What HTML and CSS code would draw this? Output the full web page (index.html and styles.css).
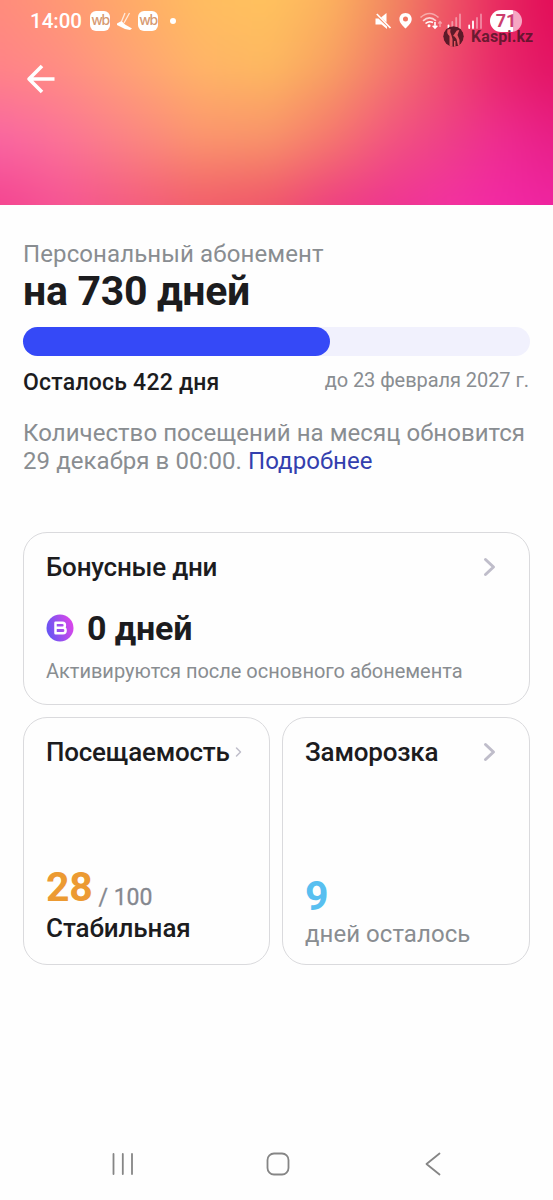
FILE: index.html
```html
<!DOCTYPE html>
<html lang="ru">
<head>
<meta charset="utf-8">
<title>Абонемент</title>
<link rel="stylesheet" href="styles.css">
</head>
<body>
<header class="hero">
  <div class="mesh"><div class="row top"></div><div class="row mid"></div><div class="row low"></div><div class="row end"></div></div>
  <div class="status">
    <span class="clock">14:00</span>
    <span class="wb">wb</span>
    <svg class="plane" width="17" height="20" viewBox="0 0 17 20"><path d="M1 12.500L5.500 10L9 13.500L16 17.500L14 19L9 18L1 14Z" fill="#fff"/><path d="M5.500 10.500L9 2M8 12L13.500 2" stroke="#fff" stroke-width="1.300" opacity=".75"/></svg>
    <span class="wb">wb</span>
    <span class="dot"></span>
    <span class="spacer"></span>
    <svg class="icons" width="109" height="22" viewBox="0 0 109 22" fill="none">
      <g fill="#fff"><path d="M.5 8.500H3.500L12 16.500V19L6.500 14.500H.5Z"/><path d="M6 7.500L11.500 3V12.500Z"/></g>
      <path d="M1.800 4L15.500 18" stroke="#fff" stroke-width="1.700"/>
      <path d="M30.500 3C26.700 3 24.400 5.800 24.400 9C24.400 12.800 27.500 15.500 30.500 18.600C33.500 15.500 36.700 12.800 36.700 9C36.700 5.800 34.300 3 30.500 3ZM30.500 6.500A2.500 2.500 0 1 1 30.500 11.500A2.500 2.500 0 1 1 30.500 6.500Z" fill="#fff" fill-rule="evenodd"/>
      <g stroke="#fff" stroke-width="1.600"><path opacity=".45" d="M45.500 7.500Q54.500-.5 63.500 7.500"/><path opacity=".7" d="M48 10.800Q54.500 5 61 10.800"/><path d="M50.500 13.500Q54 10.500 58 12.500"/></g>
      <circle cx="54" cy="15.800" r="1.500" fill="#fff"/>
      <path d="M60 12V18M57.700 15.800L60 18.200L62.300 15.800" stroke="#fff" stroke-width="1.600"/>
      <path opacity=".45" d="M65 17V12M63.300 13.500L65 11.500L66.700 13.500" stroke="#fff" stroke-width="1.300"/>
      <g stroke="#fff" stroke-width="1.800" stroke-linecap="round"><path d="M73.500 15.500V18"/><path opacity=".4" d="M77.300 12V18M81.200 8V18M85 4.500V18"/><path d="M94.200 15.500V18M98 11.500V18"/><path opacity=".4" d="M102 8V18M106 4.500V18"/></g>
    </svg>
    <span class="battery">71</span>
  </div>
  <div class="watermark">
    <svg width="21" height="21" viewBox="0 0 21 21"><defs><clipPath id="disc"><circle cx="10.500" cy="10.500" r="10.300"/></clipPath></defs><g clip-path="url(#disc)"><circle cx="10.500" cy="10.500" r="10.500" fill="#5c1a29"/><path d="M4.500 3.500Q3.500 8 6.500 10V21H9.500V13L8.500 9.500Q6.500 6 7.500 3ZM10 10L13.800 4.500L16.300 4L14.500 9L16.500 14V19H14.800L13.500 13L11.500 10.500ZM11 15H12.500V21H11Z" fill="#e65560"/></g></svg>
    <span>Kaspi.kz</span>
  </div>
  <svg class="back" width="30" height="32" viewBox="0 0 30 32" fill="none" stroke="#fff" stroke-width="3.600" stroke-linejoin="round"><path d="M16 3L3 16L16 29M3 16H28.500"/></svg>
</header>
<main class="content">
  <p class="label">Персональный абонемент</p>
  <h1 class="title">на 730 дней</h1>
  <div class="bar"><div class="fill"></div></div>
  <div class="term"><span class="left">Осталось 422 дня</span><span class="until">до 23 февраля 2027 г.</span></div>
  <p class="note"><span class="note-first">Количество посещений на месяц обновится</span><br>29 декабря в 00:00. <a class="more">Подробнее</a></p>
  <section class="card bonus">
    <div class="head"><h2 class="name n-bonus">Бонусные дни</h2><svg class="chev" width="14" height="20" viewBox="0 0 14 20"><path d="M2.500 2.500L10.500 10L2.500 17.500"/></svg></div>
    <div class="days"><svg width="28" height="28" viewBox="0 0 28 28"><defs><linearGradient id="violet" x1="0" y1=".6" x2="1" y2=".3"><stop stop-color="#6454f4"/><stop offset=".45" stop-color="#9a50ee"/><stop offset="1" stop-color="#df45ea"/></linearGradient></defs><circle cx="14" cy="14" r="13.500" fill="url(#violet)"/><path d="M9.500 8.800H16.500Q18.900 8.800 18.900 11.200Q18.900 13.700 16.500 13.700H9.500ZM9.500 13.700H17Q19.600 13.700 19.600 16.400Q19.600 19.200 17 19.200H9.500Z" fill="none" stroke="#fff" stroke-width="2.500" stroke-linejoin="round"/></svg><strong>0 дней</strong></div>
    <p class="hint">Активируются после основного абонемента</p>
  </section>
  <div class="pair">
    <section class="card small">
      <div class="head"><h2 class="name n-visit">Посещаемость</h2><svg class="chev tiny" width="8" height="12" viewBox="0 0 8 12"><path d="M1.500 2L5.500 6L1.500 10"/></svg></div>
      <div class="score"><b>28</b><span>/ 100</span></div>
      <p class="state">Стабильная</p>
    </section>
    <section class="card small">
      <div class="head"><h2 class="name n-freeze">Заморозка</h2><svg class="chev" width="14" height="20" viewBox="0 0 14 20"><path d="M2.500 2.500L10.500 10L2.500 17.500"/></svg></div>
      <b class="nine">9</b>
      <p class="remain">дней осталось</p>
    </section>
  </div>
</main>
<nav class="nav">
  <svg width="24" height="24" viewBox="0 0 24 24"><path d="M2.500 2V22M11.800 2V22M21 2V22"/></svg>
  <svg width="24" height="24" viewBox="0 0 24 24"><rect x="1.500" y="1.500" width="21" height="21" rx="6.500"/></svg>
  <svg width="24" height="24" viewBox="0 0 24 24"><path d="M18.500 1.500L5.500 12L18.500 22.500"/></svg>
</nav>
</body>
</html>
```
FILE: styles.css
```css
* { box-sizing: border-box; }
body { margin: 0; width: 553px; height: 1200px; overflow: hidden; display: flex; flex-direction: column; background: #fefefe; color: #1c1c1e; font-family: Roboto, sans-serif; }
h1, h2, p { margin: 0; white-space: nowrap; }
svg { flex: none; display: block; }

/* The header colours are four horizontal gradients blended down the page, then softened. */
.hero { position: relative; height: 205px; flex: none; overflow: hidden; background: #f2707a; }
.mesh { position: absolute; inset: -50px; filter: blur(14px); }
.row { position: absolute; inset: 0; }
.top { background: linear-gradient(90deg, #ff8c7c 50px, #ff9874 110px, #ffab68 180px, #ffbd60 250px, #ffc25e 320px, #fcb25e 380px, #f28a60 440px, #ee5464 500px, #e82a60 550px, #e20c58 603px); }
.mid { background: linear-gradient(90deg, #ff8388 50px, #ff8d84 110px, #ffa176 180px, #ffb468 250px, #fdb860 320px, #f8a062 380px, #f3766c 440px, #ee4a6e 500px, #e8286a 550px, #e31465 603px); mask-image: linear-gradient(transparent 50px, #000 120px); }
.low { background: linear-gradient(90deg, #f965a2 50px, #fb7298 110px, #fb8484 180px, #fb946e 250px, #f8926a 320px, #f5766e 380px, #f25480 440px, #ee3f88 500px, #ee2c90 550px, #e81f88 603px); mask-image: linear-gradient(transparent 120px, #000 190px); }
.end { background: linear-gradient(90deg, #f44490 50px, #f55494 110px, #f45c80 180px, #f15e6a 250px, #ef566a 320px, #ee4080 380px, #ee3690 440px, #f231a0 500px, #f229a4 550px, #ee24a0 603px); mask-image: linear-gradient(transparent 190px, #000 255px); }
.status { position: relative; display: flex; align-items: center; height: 42px; padding: 0 31px 0 30px; color: #fff; }
.clock { width: 60px; font: 500 20.5px/24px Roboto, sans-serif; }
.wb { width: 20px; height: 20px; border-radius: 6px; background: #fff; color: #d79a72; font: 500 14px/18px Inter, sans-serif; letter-spacing: -1.4px; text-align: center; }
.plane { margin: 0 5px 0 6px; }
.dot { width: 6px; height: 6px; margin-left: 12px; border-radius: 50%; background: #fff; }
.spacer { flex: 1; }
.battery { width: 32px; height: 22px; margin-left: 6px; border-radius: 11px; background: linear-gradient(90deg, #fff 71%, #f6a6c3 71%); color: #cc3e6e; font: 700 18px/22px Roboto, sans-serif; text-align: center; }
.watermark { position: absolute; left: 443px; top: 26px; display: flex; align-items: center; gap: 7px; color: rgba(72, 18, 35, .8); font: 700 16px/21px Roboto, sans-serif; letter-spacing: .1px; }
.back { position: relative; margin: 21px 0 0 26px; }

.content { padding: 34px 23px 0; }
.label { font-size: 24px; line-height: 30px; color: #898d91; letter-spacing: .11px; }
.title { margin-top: -1px; font-size: 41px; line-height: 46px; font-weight: 700; letter-spacing: -.3px; }
.bar { margin-top: 13px; height: 29px; border-radius: 15px; background: #f1f1fd; }
.fill { width: 307px; height: 29px; border-radius: 15px; background: #3549f7; }
.term { display: flex; justify-content: space-between; margin-top: 11px; height: 30px; }
.left { font-size: 23px; line-height: 31px; font-weight: 500; letter-spacing: .22px; }
.until { font-size: 20px; line-height: 26px; letter-spacing: -.06px; margin-right: 1px; color: #898d91; }
.note { margin-top: 22px; font-size: 24px; line-height: 28px; color: #898d91; letter-spacing: .07px; }
.note-first { letter-spacing: .05px; }
.more { color: #333fae; }

.card { border: 1px solid #dadadd; border-radius: 24px; padding: 0 22px; }
.head { display: flex; justify-content: space-between; align-items: center; height: 30px; }
.name { font-size: 26px; line-height: 30px; font-weight: 500; }
.n-bonus { letter-spacing: -.22px; }
.n-visit { letter-spacing: -.22px; }
.n-freeze { letter-spacing: -.2px; }
.chev { fill: none; stroke: #bfbdca; stroke-width: 3; stroke-linecap: round; stroke-linejoin: round; margin-right: 10px; }
.tiny { stroke-width: 1.5; margin-right: 4px; }
.bonus { margin-top: 57px; height: 173px; padding-top: 19px; }
.days { display: flex; align-items: center; gap: 12px; margin-top: 25px; height: 42px; }
.days strong { font-size: 34px; line-height: 42px; letter-spacing: -.1px; padding-left: 1px; }
.hint { margin-top: 9px; font-size: 20px; line-height: 26px; letter-spacing: -.02px; color: #898d91; }
.pair { display: grid; grid-template-columns: 247px 248px; gap: 12px; margin-top: 12px; }
.small { height: 248px; padding-top: 19px; }
.score { display: flex; height: 54px; margin-top: 93px; }
.score b { font-size: 41px; line-height: 54px; letter-spacing: -.3px; color: #ec9a32; }
.score span { margin: 12px 0 0 6px; font-size: 23px; line-height: 52px; color: #85888f; -webkit-text-stroke: .3px #85888f; }
.state { margin-top: -1px; font-size: 26px; line-height: 30px; font-weight: 500; letter-spacing: -.08px; }
.nine { display: block; margin-top: 105px; font-size: 41px; line-height: 48px; color: #58bff0; }
.remain { margin-top: -1px; font-size: 24px; line-height: 30px; letter-spacing: .05px; color: #898d91; }

.nav { display: flex; justify-content: space-between; margin: 187px 108px 0 111px; }
.nav svg { fill: none; stroke: #858585; stroke-width: 1.8; stroke-linecap: round; stroke-linejoin: round; }
```
